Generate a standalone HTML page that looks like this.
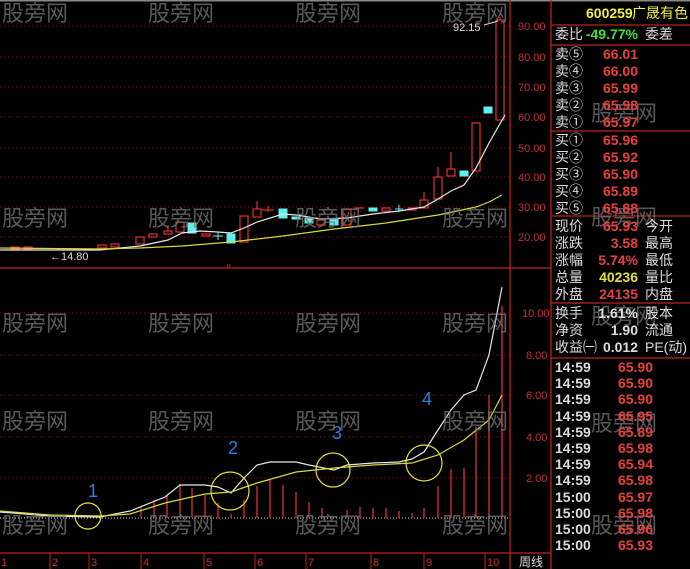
<!DOCTYPE html>
<html><head><meta charset="utf-8"><style>
html,body{margin:0;padding:0;background:#000;}
body{width:690px;height:569px;overflow:hidden;position:relative;font-family:"Liberation Sans","Noto Sans CJK SC",sans-serif;}
svg{position:absolute;left:0;top:0;}
.p{position:absolute;left:551px;width:139px;font-size:14px;color:#ddd;}
.r{position:absolute;height:17px;line-height:17px;width:139px;white-space:nowrap;}
.l{position:absolute;left:4px;}
.v{position:absolute;right:52px;color:#e84040;font-weight:bold;font-family:"Liberation Sans",sans-serif;}
.t{position:absolute;left:94px;}
</style></head><body>
<svg width="690" height="569" xmlns="http://www.w3.org/2000/svg" font-family="Liberation Sans, Noto Sans CJK SC, sans-serif">
<rect x="0" y="0" width="690" height="1.5" fill="#888"/>
<g stroke="#7a1010" stroke-dasharray="1,3" stroke-width="1">
<line x1="0" y1="26" x2="510" y2="26"/><line x1="0" y1="57" x2="510" y2="57"/><line x1="0" y1="87" x2="510" y2="87"/><line x1="0" y1="117" x2="510" y2="117"/><line x1="0" y1="148" x2="510" y2="148"/><line x1="0" y1="177" x2="510" y2="177"/><line x1="0" y1="207" x2="510" y2="207"/><line x1="0" y1="237" x2="510" y2="237"/>
<line x1="0" y1="313" x2="510" y2="313"/><line x1="0" y1="355" x2="510" y2="355"/><line x1="0" y1="395" x2="510" y2="395"/><line x1="0" y1="437" x2="510" y2="437"/><line x1="0" y1="478" x2="510" y2="478"/>
</g>
<line x1="0" y1="518" x2="510" y2="518" stroke="#ccc" stroke-dasharray="1,2"/>
<g stroke="#c02020" stroke-width="1.3" fill="none">
<line x1="510" y1="0" x2="510" y2="569"/>
<line x1="551" y1="0" x2="551" y2="569"/>
<line x1="0" y1="268" x2="551" y2="268"/>
<line x1="0" y1="553" x2="551" y2="553"/>
<line x1="551" y1="25" x2="690" y2="25"/><line x1="551" y1="45" x2="690" y2="45"/><line x1="551" y1="131" x2="690" y2="131"/><line x1="551" y1="216" x2="690" y2="216"/><line x1="551" y1="303" x2="690" y2="303"/><line x1="551" y1="358" x2="690" y2="358"/>
</g>
<g fill="#c83030" font-size="11">
<text x="518" y="30">90.00</text><text x="518" y="61">80.00</text><text x="518" y="91">70.00</text><text x="518" y="121">60.00</text><text x="518" y="152">50.00</text><text x="518" y="181">40.00</text><text x="518" y="211">30.00</text><text x="518" y="241">20.00</text>
<text x="522" y="317">10.00</text><text x="526" y="359">8.00</text><text x="526" y="399">6.00</text><text x="526" y="441">4.00</text><text x="526" y="482">2.00</text>
<text x="1" y="566">1</text><text x="52" y="566">2</text><text x="91" y="566">3</text><text x="143" y="566">4</text><text x="206" y="566">5</text><text x="257" y="566">6</text><text x="308" y="566">7</text><text x="373" y="566">8</text><text x="426" y="566">9</text><text x="487" y="566">10</text>
</g>
<g stroke="#c02020"><line x1="50" y1="553" x2="50" y2="569"/><line x1="89" y1="553" x2="89" y2="569"/><line x1="141" y1="553" x2="141" y2="569"/><line x1="204" y1="553" x2="204" y2="569"/><line x1="255" y1="553" x2="255" y2="569"/><line x1="306" y1="553" x2="306" y2="569"/><line x1="371" y1="553" x2="371" y2="569"/><line x1="424" y1="553" x2="424" y2="569"/><line x1="485" y1="553" x2="485" y2="569"/></g>
<text x="519" y="566" fill="#ddd" font-size="12">周线</text>
<g stroke="#e03030" fill="none" stroke-width="1.2">
<rect x="11" y="247" width="8" height="2"/><rect x="24" y="247" width="8" height="2"/>
<rect x="98" y="245" width="8" height="3"/><rect x="111" y="244" width="8" height="3"/>
<rect x="136" y="237" width="8" height="7"/><rect x="149" y="234" width="8" height="3"/>
<rect x="164" y="231" width="8" height="3"/><line x1="168" y1="225" x2="168" y2="231"/>
<rect x="176" y="222" width="8" height="10"/>
<rect x="202" y="234" width="8" height="2"/>
<rect x="240" y="216" width="8" height="26"/>
<rect x="253" y="209" width="8" height="8"/><line x1="257" y1="201" x2="257" y2="209"/>
<line x1="262" y1="210" x2="274" y2="210"/><line x1="268" y1="206" x2="268" y2="212"/>
<rect x="317" y="220" width="8" height="5"/>
<rect x="343" y="209" width="8" height="16"/>
<line x1="354" y1="208" x2="364" y2="208"/>
<rect x="382" y="208" width="8" height="3"/>
<rect x="408" y="208" width="8" height="2"/>
<rect x="420" y="200" width="8" height="8"/><line x1="424" y1="192" x2="424" y2="200"/>
<rect x="434" y="177" width="8" height="22"/><line x1="438" y1="167" x2="438" y2="177"/>
<rect x="447" y="169" width="8" height="7"/><line x1="451" y1="152" x2="451" y2="169"/>
<rect x="472" y="123" width="8" height="48"/>
<rect x="496" y="20" width="8" height="100"/><line x1="500" y1="17" x2="500" y2="20"/>
</g>
<g fill="#60f0f0" stroke="#60f0f0">
<rect x="188" y="223" width="8" height="10"/><rect x="227" y="234" width="8" height="9"/>
<rect x="279" y="209" width="8" height="9"/><rect x="292" y="217" width="8" height="2"/><rect x="305" y="218" width="8" height="5"/><rect x="330" y="219" width="8" height="6"/><rect x="369" y="208" width="8" height="3"/><rect x="460" y="171" width="8" height="5"/><rect x="484" y="107" width="8" height="6"/>
<line x1="399" y1="205" x2="399" y2="212"/><line x1="395" y1="209" x2="403" y2="209"/>
<line x1="218" y1="232" x2="218" y2="240"/><line x1="213" y1="236" x2="223" y2="236"/>
</g>
<polyline fill="none" stroke="#e8e8e8" stroke-width="1.2" points="0,250 100,250 140,246 168,240 182,233 200,231 218,232 231,233 244,228 257,222 283,214 296,215 321,219 347,218 373,214 399,211 424,207 438,199 451,191 464,185 476,168 489,143 505,115"/>
<polyline fill="none" stroke="#d8d840" stroke-width="1.2" points="0,248 100,249 140,248 182,246 231,242 283,236 334,229 386,223 438,215 476,207 489,202 502,195"/>
<text x="50" y="260" fill="#ddd" font-size="11">←14.80</text>
<text x="453" y="31" fill="#ddd" font-size="11">92.15</text>
<line x1="484" y1="25" x2="498" y2="21" stroke="#ddd"/>
<text x="226" y="268" fill="#e03030" font-size="9">»</text>
<g stroke="#e03030" stroke-width="1.3">
<line x1="141" y1="518" x2="141" y2="506"/><line x1="154" y1="518" x2="154" y2="500"/><line x1="167" y1="518" x2="167" y2="495"/><line x1="180" y1="518" x2="180" y2="484"/><line x1="192" y1="518" x2="192" y2="488"/><line x1="205" y1="518" x2="205" y2="495"/><line x1="218" y1="518" x2="218" y2="503"/><line x1="231" y1="518" x2="231" y2="514"/><line x1="244" y1="518" x2="244" y2="500"/><line x1="257" y1="518" x2="257" y2="486"/><line x1="270" y1="518" x2="270" y2="480"/><line x1="283" y1="518" x2="283" y2="485"/><line x1="296" y1="518" x2="296" y2="492"/><line x1="309" y1="518" x2="309" y2="502"/><line x1="322" y1="518" x2="322" y2="508"/><line x1="347" y1="518" x2="347" y2="510"/><line x1="360" y1="518" x2="360" y2="507"/><line x1="373" y1="518" x2="373" y2="508"/><line x1="386" y1="518" x2="386" y2="508"/><line x1="399" y1="518" x2="399" y2="511"/><line x1="412" y1="518" x2="412" y2="513"/><line x1="424" y1="518" x2="424" y2="508"/><line x1="438" y1="518" x2="438" y2="486"/><line x1="451" y1="518" x2="451" y2="469"/><line x1="464" y1="518" x2="464" y2="468"/><line x1="476" y1="518" x2="476" y2="427"/><line x1="489" y1="518" x2="489" y2="395"/><line x1="502" y1="518" x2="502" y2="306"/>
</g>
<polyline fill="none" stroke="#e8e8e8" stroke-width="1.2" points="0,512 50,516 100,517 130,511 165,497 180,485 205,485 218,487 231,493 244,478 257,465 270,462 296,462 309,465 334,470 347,465 373,463 399,462 412,459 424,452 438,430 451,410 464,395 476,390 489,355 502,287"/>
<polyline fill="none" stroke="#d8d840" stroke-width="1.2" points="0,511 50,515 100,516 130,514 165,503 205,494 231,492 257,483 296,472 334,468 373,465 412,463 438,455 464,440 489,420 502,395"/>
<g fill="none" stroke="#e0e040" stroke-width="1.2">
<circle cx="88" cy="516" r="13"/><circle cx="230" cy="491" r="19"/><circle cx="333" cy="470" r="17"/><circle cx="424" cy="463" r="18"/>
</g>
<g fill="#2a80e0" font-size="18">
<text x="88" y="497">1</text><text x="228" y="454">2</text><text x="332" y="439">3</text><text x="422" y="405">4</text>
</g>
<g fill="#777" fill-opacity="0.75" font-size="22" font-family="Noto Sans CJK SC, sans-serif">
<text x="2" y="21">股旁网</text><text x="148" y="21">股旁网</text><text x="295" y="21">股旁网</text><text x="442" y="21">股旁网</text>
<text x="2" y="226">股旁网</text><text x="148" y="226">股旁网</text><text x="295" y="226">股旁网</text><text x="442" y="226">股旁网</text>
<text x="2" y="331">股旁网</text><text x="148" y="331">股旁网</text><text x="295" y="331">股旁网</text><text x="442" y="331">股旁网</text>
<text x="2" y="429">股旁网</text><text x="148" y="429">股旁网</text><text x="295" y="429">股旁网</text><text x="442" y="429">股旁网</text>
<text x="2" y="533">股旁网</text><text x="148" y="533">股旁网</text><text x="295" y="533">股旁网</text><text x="442" y="533">股旁网</text>
<text x="591" y="121">股旁网</text><text x="591" y="225">股旁网</text><text x="591" y="324">股旁网</text><text x="591" y="431">股旁网</text><text x="591" y="533">股旁网</text>
</g>
</svg>
<div class="p" style="top:0;height:569px;">
<div class="r" style="top:5px;color:#f0f040;font-size:14px;"><span style="position:absolute;left:35px;font-weight:bold;">600259</span><span style="position:absolute;left:81px;">广晟有色</span></div>
<div class="r" style="top:26px"><span class="l">委比</span><span class="v" style="color:#40e040">-49.77%</span><span class="t">委差</span></div>
<div class="r" style="top:46px"><span class="l">卖⑤</span><span class="v">66.01</span></div>
<div class="r" style="top:63px"><span class="l">卖④</span><span class="v">66.00</span></div>
<div class="r" style="top:80px"><span class="l">卖③</span><span class="v">65.99</span></div>
<div class="r" style="top:97px"><span class="l">卖②</span><span class="v">65.98</span></div>
<div class="r" style="top:114px"><span class="l">卖①</span><span class="v">65.97</span></div>
<div class="r" style="top:132px"><span class="l">买①</span><span class="v">65.96</span></div>
<div class="r" style="top:149px"><span class="l">买②</span><span class="v">65.92</span></div>
<div class="r" style="top:166px"><span class="l">买③</span><span class="v">65.90</span></div>
<div class="r" style="top:183px"><span class="l">买④</span><span class="v">65.89</span></div>
<div class="r" style="top:200px"><span class="l">买⑤</span><span class="v">65.88</span></div>
<div class="r" style="top:218px"><span class="l">现价</span><span class="v">65.93</span><span class="t">今开</span></div>
<div class="r" style="top:235px"><span class="l">涨跌</span><span class="v">3.58</span><span class="t">最高</span></div>
<div class="r" style="top:252px"><span class="l">涨幅</span><span class="v">5.74%</span><span class="t">最低</span></div>
<div class="r" style="top:269px"><span class="l">总量</span><span class="v" style="color:#e0e040">40236</span><span class="t">量比</span></div>
<div class="r" style="top:286px"><span class="l">外盘</span><span class="v">24135</span><span class="t">内盘</span></div>
<div class="r" style="top:305px"><span class="l">换手</span><span class="v" style="color:#ddd">1.61%</span><span class="t">股本</span></div>
<div class="r" style="top:322px"><span class="l">净资</span><span class="v" style="color:#ddd">1.90</span><span class="t">流通</span></div>
<div class="r" style="top:339px"><span class="l">收益㈠</span><span class="v" style="color:#ddd">0.012</span><span class="t">PE(动)</span></div>
<div style="position:absolute;top:359px;left:0;width:139px;font-weight:bold;font-family:'Liberation Sans',sans-serif;">
<div class="r" style="top:0px"><span class="l">14:59</span><span class="v" style="right:37px">65.90</span></div>
<div class="r" style="top:16px"><span class="l">14:59</span><span class="v" style="right:37px">65.90</span></div>
<div class="r" style="top:32px"><span class="l">14:59</span><span class="v" style="right:37px">65.90</span></div>
<div class="r" style="top:49px"><span class="l">14:59</span><span class="v" style="right:37px">65.95</span></div>
<div class="r" style="top:65px"><span class="l">14:59</span><span class="v" style="right:37px">65.89</span></div>
<div class="r" style="top:81px"><span class="l">14:59</span><span class="v" style="right:37px">65.98</span></div>
<div class="r" style="top:97px"><span class="l">14:59</span><span class="v" style="right:37px">65.94</span></div>
<div class="r" style="top:113px"><span class="l">14:59</span><span class="v" style="right:37px">65.98</span></div>
<div class="r" style="top:130px"><span class="l">15:00</span><span class="v" style="right:37px">65.97</span></div>
<div class="r" style="top:146px"><span class="l">15:00</span><span class="v" style="right:37px">65.98</span></div>
<div class="r" style="top:162px"><span class="l">15:00</span><span class="v" style="right:37px">65.96</span></div>
<div class="r" style="top:178px"><span class="l">15:00</span><span class="v" style="right:37px">65.93</span></div>
</div>
</div>
</body></html>
